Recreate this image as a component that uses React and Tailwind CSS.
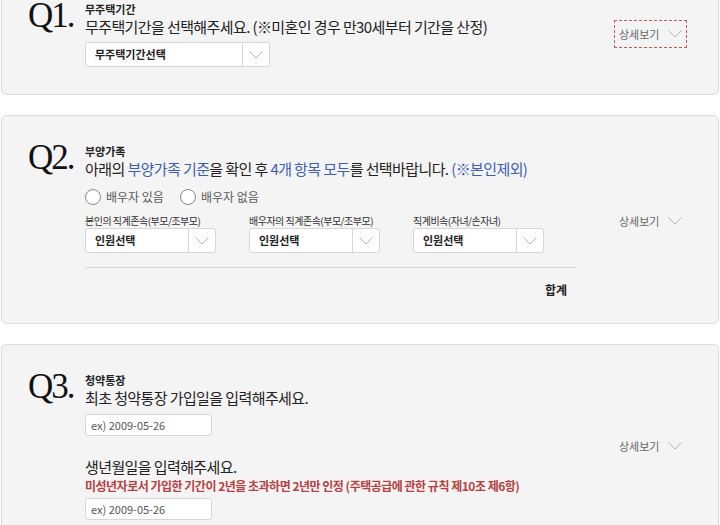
const kr = { fontFamily: '"Noto Sans CJK KR", "Noto Sans", sans-serif' };

function Chevron() {
  return (
    <svg width="14" height="8" viewBox="0 0 14 8">
      <path d="M0.5 0.5 L7 7 L13.5 0.5" fill="none" stroke="#b5b5b5" strokeWidth="1" />
    </svg>
  );
}

function Select({ width, text }) {
  return (
    <div className={`flex h-[25px] items-stretch rounded-[3px] border border-[#d6d6d6] bg-white ${width}`}>
      <div className="flex flex-1 items-center pl-[9px] text-[11px] font-semibold text-[#222]">{text}</div>
      <div className="flex w-[27px] items-center justify-center border-l border-[#d6d6d6]">
        <Chevron />
      </div>
    </div>
  );
}

function Detail({ outlined }) {
  return (
    <div className="flex w-[104px] shrink-0 items-center self-center">
      <div
        className={`flex items-center gap-[9px] px-[4px] py-[5px] ${
          outlined ? 'border border-dashed border-[#c0575a]' : 'border border-transparent'
        }`}
      >
        <span className="text-[11px] text-[#666]">상세보기</span>
        <Chevron />
      </div>
    </div>
  );
}

function Card({ q, children, outlined, className = '' }) {
  return (
    <div className={`flex rounded-[5px] border border-[#dcdcdc] bg-[#f4f4f4] pl-[26px] ${className}`}>
      <div
        className="w-[57px] shrink-0 text-[35px] leading-[30px] tracking-[-2px] text-[#111]"
        style={{ fontFamily: '"Liberation Serif", serif' }}
      >
        {q}
      </div>
      <div className="flex-1">{children}</div>
      <Detail outlined={outlined} />
    </div>
  );
}

function Radio({ label }) {
  return (
    <label className="flex items-center gap-[5px]">
      <span className="h-[16px] w-[16px] rounded-full border border-[#888] bg-white" />
      <span className="text-[12px] text-[#5a5a5a]">{label}</span>
    </label>
  );
}

function DateInput() {
  return (
    <div className="flex h-[22px] w-[127px] items-center rounded-[3px] border border-[#d6d6d6] bg-white pl-[5px] text-[11px] text-[#555]">
      ex) 2009-05-26
    </div>
  );
}

export default function App() {
  return (
    <div className="min-h-[525px] overflow-hidden bg-white px-[1px]" style={kr}>
      <div className="-mt-[30px] flex flex-col gap-[20px]">
        <Card q="Q1." outlined className="pt-[30px] pb-[27px]">
          <div className="text-[11px] font-bold leading-[16px] text-[#222]">무주택기간</div>
          <div className="text-[15px] leading-[20px] tracking-[-0.6px] text-[#222]">
            무주택기간을 선택해주세요. (※미혼인 경우 만30세부터 기간을 산정)
          </div>
          <div className="mt-[5px]">
            <Select width="w-[185px]" text="무주택기간선택" />
          </div>
        </Card>

        <Card q="Q2." className="pt-[27px] pb-[24px]">
          <div className="text-[11px] font-bold leading-[16px] text-[#222]">부양가족</div>
          <div className="text-[15px] leading-[20px] tracking-[-0.6px] text-[#222]">
            아래의 <span className="text-[#3b5fb8]">부양가족 기준</span>을 확인 후{' '}
            <span className="text-[#3b5fb8]">4개 항목 모두</span>를 선택바랍니다.{' '}
            <span className="text-[#3b5fb8]">(※본인제외)</span>
          </div>
          <div className="mt-[9px] flex gap-[16px]">
            <Radio label="배우자 있음" />
            <Radio label="배우자 없음" />
          </div>
          <div className="mt-[8px] flex gap-[33px]">
            {['본인의 직계존속(부모/조부모)', '배우자의 직계존속(부모/조부모)', '직계비속(자녀/손자녀)'].map((l) => (
              <div key={l}>
                <div className="text-[10px] leading-[14px] tracking-[-0.5px] text-[#333]">{l}</div>
                <Select width="w-[131px]" text="인원선택" />
              </div>
            ))}
          </div>
          <div className="mt-[14px] w-[491px] border-t border-[#d8d8d8]" />
          <div className="mt-[13px] w-[482px] text-right text-[12px] font-bold text-[#222]">합계</div>
        </Card>

        <Card q="Q3." className="pt-[27px] pb-[26px]">
          <div className="text-[11px] font-bold leading-[16px] text-[#222]">청약통장</div>
          <div className="text-[15px] leading-[20px] tracking-[-0.6px] text-[#222]">최초 청약통장 가입일을 입력해주세요.</div>
          <div className="mt-[6px]">
            <DateInput />
          </div>
          <div className="mt-[21px] text-[15px] leading-[20px] tracking-[-0.6px] text-[#222]">생년월일을 입력해주세요.</div>
          <div className="text-[12px] font-bold leading-[17px] tracking-[-0.5px] text-[#b84040]">
            미성년자로서 가입한 기간이 2년을 초과하면 2년만 인정 (주택공급에 관한 규칙 제10조 제6항)
          </div>
          <div className="mt-[4px]">
            <DateInput />
          </div>
        </Card>
      </div>
    </div>
  );
}
